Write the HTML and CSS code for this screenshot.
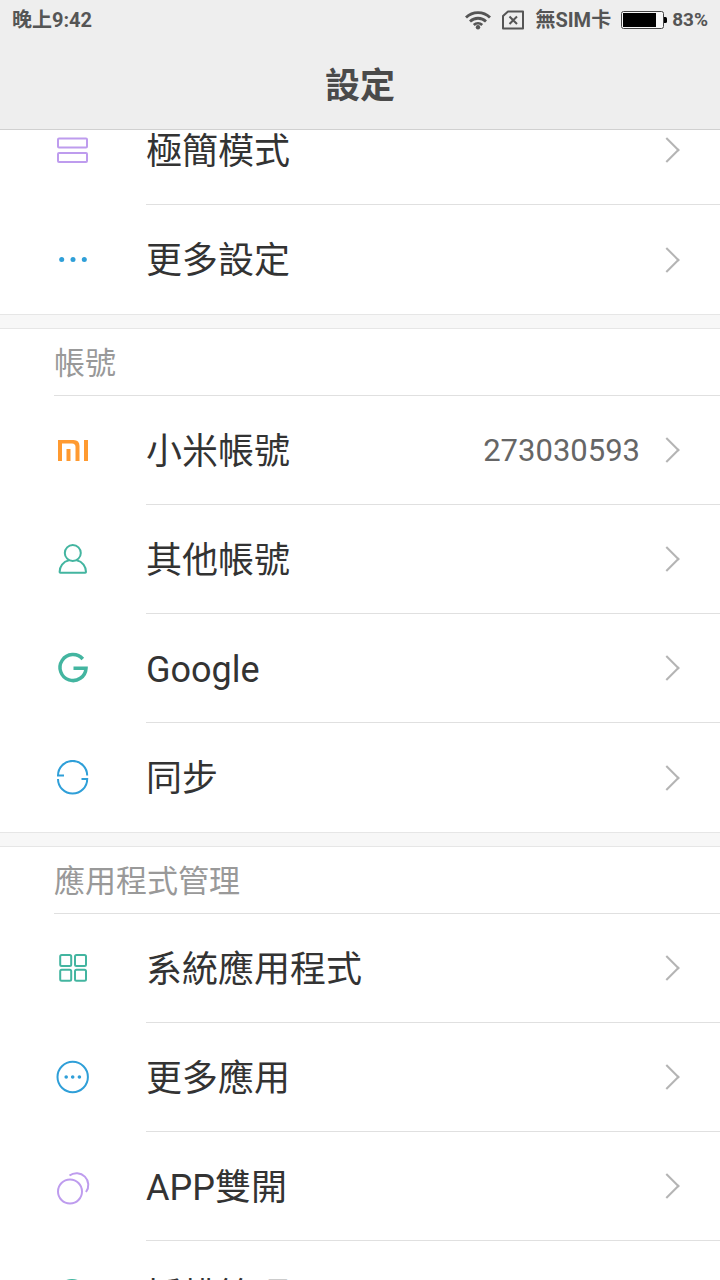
FILE: index.html
```html
<!DOCTYPE html>
<html lang="zh-Hant">
<head>
<meta charset="UTF-8">
<meta name="viewport" content="width=device-width, initial-scale=1.0">
<title>設定</title>
<link rel="stylesheet" href="styles.css">
</head>
<body>
    <header class="top">
        <div class="status">
            <span class="time">晚上9:42</span>
            <svg class="wifi" width="26" height="20" viewBox="0 0 26 20" fill="none" stroke="#555" stroke-width="2.8">
                <path d="M1 7.500a17 17 0 0 1 24 0M5 11.500a11.500 11.500 0 0 1 16 0M8.800 15a6.200 6.200 0 0 1 8.400 0"/>
                <circle cx="13" cy="17.300" r="2.200" fill="#555" stroke="none"/>
            </svg>
            <svg class="sim" width="24" height="20" viewBox="0 0 24 20" fill="none" stroke="#555" stroke-width="2">
                <path d="M7 1.500H22v17H2V6z" stroke-linejoin="round"/>
                <path d="M8.500 6.500l7.500 7.500M16 6.500l-7.500 7.500"/>
            </svg>
            <span class="carrier">無SIM卡</span>
            <svg class="battery" width="46" height="18" viewBox="0 0 46 18">
                <rect x=".5" y=".5" width="42" height="17" rx="2" fill="#f7f7f7" stroke="#444"/>
                <rect x="2" y="2" width="33" height="14" fill="#000"/>
                <path d="M43 6h1.500q1.500 0 1.500 1.500v3q0 1.500-1.500 1.500H43z" fill="#000"/>
            </svg>
            <span class="percent">83%</span>
        </div>
        <h1>設定</h1>
    </header>

    <main class="settings">
        <section class="group">
            <a class="row" href="#">
                <svg class="icon purple" viewBox="0 0 36 36">
                    <rect x="3" y="5.500" width="29" height="9" rx="1"/>
                    <rect x="3" y="20" width="29" height="9" rx="1"/>
                </svg>
                <span class="line"><span class="name">極簡模式</span></span>
            </a>
            <a class="row" href="#">
                <svg class="icon blue dots" viewBox="0 0 36 36">
                    <circle cx="6.700" cy="17.500" r="2.500"/>
                    <circle cx="18" cy="17.500" r="2.500"/>
                    <circle cx="29.300" cy="17.500" r="2.500"/>
                </svg>
                <span class="line"><span class="name">更多設定</span></span>
            </a>
        </section>

        <section class="group">
            <h2>帳號</h2>
            <a class="row" href="#">
                <svg class="icon mi" viewBox="0 0 36 36">
                    <path d="M3 28V7h15.500q6 0 6 6v15h-4V14q0-3.500-3.500-3.500H7V28zM11.500 16h4v12h-4zM29 7h4v21h-4z"/>
                </svg>
                <span class="line"><span class="name">小米帳號</span><span class="value">273030593</span></span>
            </a>
            <a class="row" href="#">
                <svg class="icon green" viewBox="0 0 36 36">
                    <circle cx="17.800" cy="11" r="8"/>
                    <path d="M14 18.300C8 19.500 4.600 24.500 4.600 30q0 .8.800.8H30.200q.8 0 .8-.8C31 24.500 27.600 19.500 21.600 18.300"/>
                </svg>
                <span class="line"><span class="name">其他帳號</span></span>
            </a>
            <a class="row" href="#">
                <svg class="icon green google" viewBox="0 0 36 36">
                    <path d="M27.800 8A13 13 0 1 0 31 17.300H18.500"/>
                </svg>
                <span class="line"><span class="name">Google</span></span>
            </a>
            <a class="row" href="#">
                <svg class="icon blue" viewBox="0 0 36 36">
                    <path d="M9 15.500H3A14.600 14.600 0 0 1 32.200 15.500M26.500 19H32.200A14.600 14.600 0 0 1 3 19"/>
                </svg>
                <span class="line"><span class="name">同步</span></span>
            </a>
        </section>

        <section class="group">
            <h2>應用程式管理</h2>
            <a class="row" href="#">
                <svg class="icon green" viewBox="0 0 36 36">
                    <rect x="5.200" y="4" width="11" height="11" rx="1.500"/>
                    <rect x="20" y="4" width="11" height="11" rx="1.500"/>
                    <rect x="5.200" y="18.800" width="11" height="11" rx="1.500"/>
                    <rect x="20" y="18.800" width="11" height="11" rx="1.500"/>
                </svg>
                <span class="line"><span class="name">系統應用程式</span></span>
            </a>
            <a class="row" href="#">
                <svg class="icon blue" viewBox="0 0 36 36">
                    <circle cx="17.700" cy="17" r="15.200"/>
                    <path class="solid" d="M9.400 17a1.800 1.800 0 1 0 3.600 0a1.800 1.800 0 1 0-3.600 0M15.900 17a1.800 1.800 0 1 0 3.600 0a1.800 1.800 0 1 0-3.600 0M22.600 17a1.800 1.800 0 1 0 3.600 0a1.800 1.800 0 1 0-3.600 0"/>
                </svg>
                <span class="line"><span class="name">更多應用</span></span>
            </a>
            <a class="row" href="#">
                <svg class="icon purple" viewBox="0 0 36 36">
                    <circle cx="15" cy="22.500" r="12"/>
                    <path d="M14.500 6.500A11.800 11.800 0 0 1 31 23"/>
                </svg>
                <span class="line"><span class="name">APP雙開</span></span>
            </a>
            <a class="row" href="#">
                <svg class="icon green" viewBox="0 0 36 36">
                    <circle cx="17" cy="17" r="15"/>
                </svg>
                <span class="line"><span class="name">授權管理</span></span>
            </a>
        </section>
    </main>
</body>
</html>
```

FILE: styles.css
```css
* {
  box-sizing: border-box;
}
body {
  margin: 0;
  height: 100vh;
  overflow: hidden;
  background: #f7f7f7;
  color: #333;
  font-family: Roboto, "Noto Sans CJK TC", sans-serif;
}

/* header */
.top {
  position: sticky;
  top: 0;
  z-index: 1;
  height: 130px;
  background: #eee;
  border-bottom: 1px solid #d0d0d0;
}
.status {
  display: flex;
  align-items: center;
  height: 40px;
  padding: 0 12px;
  color: #555;
  font-size: 20px;
  font-weight: 700;
  line-height: 24px;
}
.time {
  margin-right: auto;
}
.sim {
  margin-left: 10px;
}
.carrier {
  margin: 0 10px;
}
.battery {
  margin-right: 5px;
}
.percent {
  font-size: 19px;
}
h1 {
  margin: 0;
  color: #4a4a4a;
  font-size: 35px;
  font-weight: 700;
  line-height: 94px;
  text-align: center;
}

/* list */
.settings {
  margin-top: -35px;
}
.group {
  margin-bottom: 13px;
  background: #fff;
  border-top: 1px solid #e6e6e6;
  border-bottom: 1px solid #e6e6e6;
}
h2 {
  height: 67px;
  margin: 0 0 0 54px;
  border-bottom: 1px solid #e0e0e0;
  color: #999;
  font-size: 31px;
  font-weight: 400;
  line-height: 69px;
}
.row {
  display: flex;
  align-items: center;
  height: 109px;
  padding-left: 55px;
  color: inherit;
  text-decoration: none;
}
.line {
  display: flex;
  flex: 1;
  align-items: center;
  height: 100%;
  margin-left: 55px;
  padding-right: 44px;
  border-bottom: 1px solid #e0e0e0;
}
.row:last-child .line {
  border-bottom: 0;
}
.line::after {
  content: "";
  box-sizing: border-box;
  width: 18px;
  height: 18px;
  border: solid #b4b4b4;
  border-width: 2px 2px 0 0;
  transform: rotate(45deg);
}
.name {
  flex: 1;
  padding-top: 3px;
  font-size: 36px;
  line-height: 48px;
}
.value {
  margin-right: 18px;
  color: #666;
  font-size: 31px;
}

/* icons */
.icon {
  width: 36px;
  height: 36px;
  fill: none;
  stroke-width: 2;
}
.purple {
  stroke: #be9cee;
}
.blue {
  stroke: #2f9fd8;
}
.green {
  stroke: #43b5a0;
}
.google {
  stroke-width: 3.5;
}
.dots,
.solid {
  fill: #2f9fd8;
  stroke: none;
}
.mi {
  fill: #ff9a30;
}
```
